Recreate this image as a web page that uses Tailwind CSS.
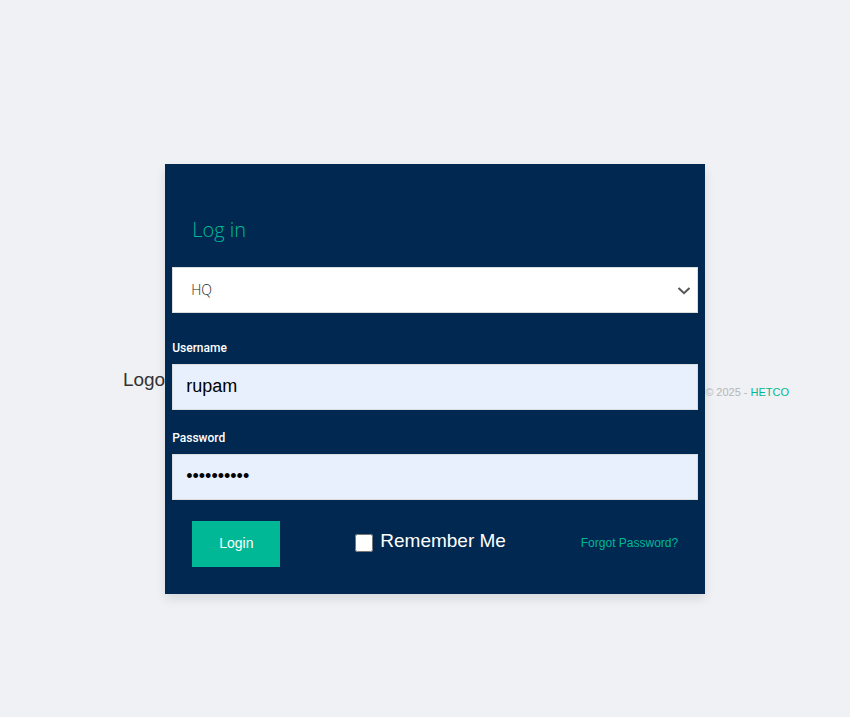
<!DOCTYPE html>
<html lang="en">
<head>
<meta charset="utf-8">
<meta name="viewport" content="width=device-width, initial-scale=1">
<title>Log in</title>
<script src="https://cdn.jsdelivr.net/npm/@tailwindcss/browser@4"></script>
</head>
<body class="flex min-h-screen items-center justify-center bg-[#f0f1f5] pt-10 pl-[62px] font-['Liberation_Sans',Arial,sans-serif] text-[#333]">
  <div class="pt-0.5 text-[19px] leading-7">Logo</div>
  <main class="w-full max-w-[540px] bg-[#002851] px-[7px] pt-[52px] pb-[27px] shadow-[0_5px_10px_rgba(0,0,0,0.1)]">
    <form>
      <h1 class="px-5 font-['Open_Sans',sans-serif] text-xl leading-7 font-light text-[#00b896]">Log in</h1>
      <div class="relative mt-[23px]">
        <select aria-label="Branch" class="block h-[46px] w-full appearance-none border border-[#d9dde0] bg-white px-[18px] font-['Open_Sans',sans-serif] text-sm font-light text-[#222]">
          <option>HQ</option>
        </select>
        <svg class="pointer-events-none absolute top-[19px] right-[7px] h-2.5 w-3.5" viewBox="0 0 14 10" fill="none" stroke="#555" stroke-width="2" aria-hidden="true"><path d="M1.500 2 7 7.200 12.500 2"/></svg>
      </div>
      <label for="username" class="mt-[25px] block font-[Roboto,sans-serif] text-xs leading-5 font-medium text-white">Username</label>
      <input id="username" type="text" value="rupam" class="mt-1.5 block h-[46px] w-full border border-[#d9dde0] bg-[#e8f0fe] px-[13px] text-lg text-black">
      <label for="password" class="mt-[18px] block font-[Roboto,sans-serif] text-xs leading-5 font-medium text-white">Password</label>
      <input id="password" type="password" value="abcdefghij" class="mt-1.5 block h-[46px] w-full border border-[#d9dde0] bg-[#e8f0fe] px-[13px] text-lg text-black">
      <div class="mt-[21px] flex items-center justify-between px-5">
        <button type="submit" class="h-[46px] bg-[#00b896] px-[27px] pb-0.5 text-sm text-white">Login</button>
        <label class="flex items-center gap-[7px] pb-1.5 text-[19px] leading-7 text-white"><input type="checkbox" class="mt-1 size-[18px]">Remember Me</label>
        <a href="#" class="pb-0.5 text-xs leading-5 text-[#00b896]">Forgot Password?</a>
      </div>
    </form>
  </main>
  <footer class="pt-[26px] text-[11px] leading-5 whitespace-nowrap text-[#b5b5b5]">© 2025 - <a href="#" class="text-[#00b896]">HETCO</a></footer>
</body>
</html>
